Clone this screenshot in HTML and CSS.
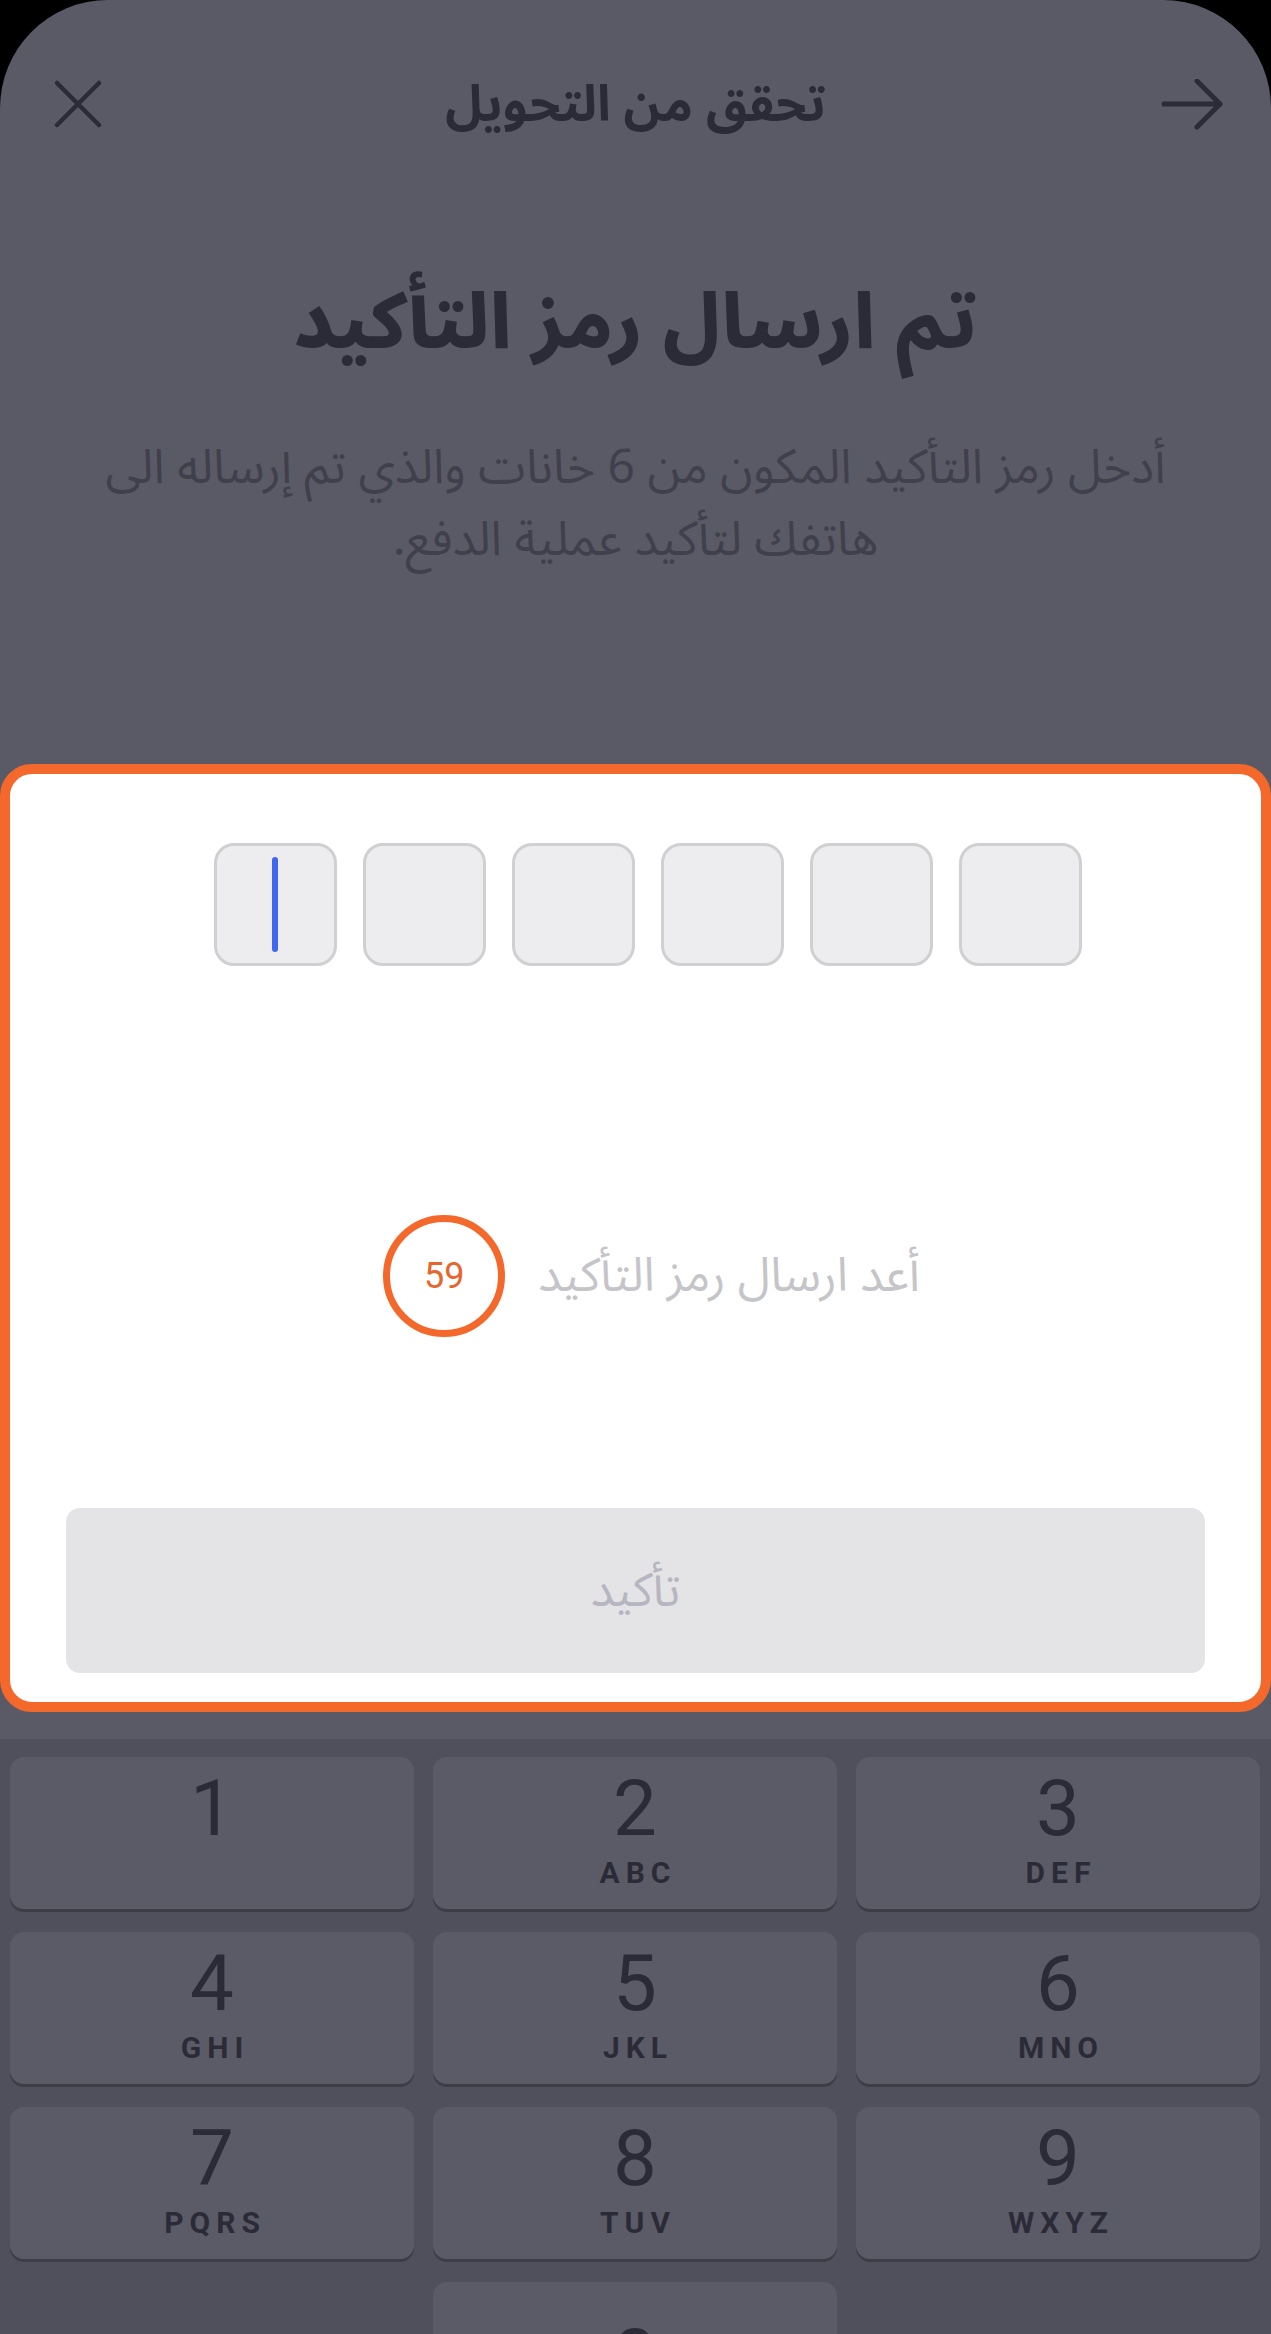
FILE: index.html
```html
<!DOCTYPE html>
<html lang="ar" dir="rtl">
<head>
    <meta charset="UTF-8">
    <meta name="viewport" content="width=device-width, initial-scale=1.0">
    <title>تحقق من التحويل</title>
    <link rel="stylesheet" href="styles.css">
</head>
<body>
    <div class="screen">
        <header class="topbar">
            <button class="icon-btn" aria-label="رجوع">
                <svg width="64" height="52" viewBox="0 0 64 52">
                    <path d="M3 25 H59 M36 2 L59 25 L36 48" fill="none" stroke="#2b2b37" stroke-width="5" stroke-linecap="round" stroke-linejoin="round"/>
                </svg>
            </button>
            <h2 class="page-title">تحقق من التحويل</h2>
            <button class="icon-btn" aria-label="إغلاق">
                <svg width="64" height="52" viewBox="0 0 64 52">
                    <path d="M11 4 L53 46 M53 4 L11 46" fill="none" stroke="#2b2b37" stroke-width="4.5" stroke-linecap="round"/>
                </svg>
            </button>
        </header>

        <section class="intro">
            <h1>تم ارسال رمز التأكيد</h1>
            <p>أدخل رمز التأكيد المكون من 6 خانات والذي تم إرساله الى<br>هاتفك لتأكيد عملية الدفع.</p>
        </section>

        <div class="card">
            <div class="otp-row" dir="ltr">
                <div class="otp-box active"><span class="caret"></span></div>
                <div class="otp-box"></div>
                <div class="otp-box"></div>
                <div class="otp-box"></div>
                <div class="otp-box"></div>
                <div class="otp-box"></div>
            </div>

            <div class="resend-row">
                <span class="resend-text">أعد ارسال رمز التأكيد</span>
                <span class="timer">59</span>
            </div>

            <button class="confirm-btn" disabled>تأكيد</button>
        </div>

        <div class="keypad" dir="ltr">
            <div class="key"><span class="digit">1</span><span class="letters">&nbsp;</span></div>
            <div class="key"><span class="digit">2</span><span class="letters">ABC</span></div>
            <div class="key"><span class="digit">3</span><span class="letters">DEF</span></div>
            <div class="key"><span class="digit">4</span><span class="letters">GHI</span></div>
            <div class="key"><span class="digit">5</span><span class="letters">JKL</span></div>
            <div class="key"><span class="digit">6</span><span class="letters">MNO</span></div>
            <div class="key"><span class="digit">7</span><span class="letters">PQRS</span></div>
            <div class="key"><span class="digit">8</span><span class="letters">TUV</span></div>
            <div class="key"><span class="digit">9</span><span class="letters">WXYZ</span></div>
            <div class="key-blank"></div>
            <div class="key key-zero"><span class="digit">0</span></div>
            <div class="key-blank key-delete">
                <svg width="66" height="50" viewBox="0 0 66 50">
                    <path d="M20 3 H58 A5 5 0 0 1 63 8 V42 A5 5 0 0 1 58 47 H20 L3 25 Z" fill="none" stroke="#2b2b37" stroke-width="4" stroke-linejoin="round"/>
                    <path d="M30 15 L48 35 M48 15 L30 35" fill="none" stroke="#2b2b37" stroke-width="4" stroke-linecap="round"/>
                </svg>
            </div>
        </div>
    </div>
</body>
</html>
```

FILE: styles.css
```css
body {
    margin: 0;
    padding: 0;
    background: #000;
    font-family: "Noto Sans Arabic", "Noto Kufi Arabic", "DejaVu Sans", sans-serif;
}
.screen {
    width: 1271px;
    height: 2334px;
    background: #5a5a66;
    border-radius: 108px 108px 0 0;
    overflow: hidden;
}
.topbar {
    height: 210px;
    display: flex;
    align-items: center;
    justify-content: space-between;
    padding: 0 46px;
}
.icon-btn {
    background: none;
    border: 0;
    padding: 0;
    width: 64px;
    height: 52px;
}
.page-title {
    margin: 0;
    font-size: 50px;
    font-weight: 700;
    color: #2b2b37;
}
.intro {
    height: 554px;
    box-sizing: border-box;
    padding-top: 64px;
    text-align: center;
}
.intro h1 {
    margin: 0;
    font-size: 77px;
    line-height: 100px;
    font-weight: 800;
    color: #2b2b37;
}
.intro p {
    margin: 58px auto 0;
    width: 1180px;
    font-size: 48px;
    line-height: 72px;
    color: #40404c;
}
.card {
    height: 948px;
    box-sizing: border-box;
    background: #fff;
    border: 10px solid #f4692b;
    border-radius: 32px;
    display: flex;
    flex-direction: column;
    align-items: center;
}
.otp-row {
    display: flex;
    gap: 26px;
    margin-top: 69px;
    padding-left: 24px;
}
.otp-box {
    width: 123px;
    height: 123px;
    box-sizing: border-box;
    background: #ededef;
    border: 3px solid #d0d0d3;
    border-radius: 20px;
    display: flex;
    align-items: center;
    justify-content: center;
}
.caret {
    width: 6px;
    height: 95px;
    border-radius: 3px;
    background: #3f68ee;
}
.resend-row {
    display: flex;
    align-items: center;
    gap: 33px;
    margin-top: 249px;
    padding-left: 32px;
}
.resend-text {
    font-size: 47px;
    line-height: 60px;
    color: #c5c5c9;
}
.timer {
    width: 122px;
    height: 122px;
    box-sizing: border-box;
    border: 7px solid #f4692b;
    border-radius: 50%;
    display: flex;
    align-items: center;
    justify-content: center;
    font-family: Roboto, "Liberation Sans", sans-serif;
    font-size: 36px;
    color: #e8652c;
}
.confirm-btn {
    margin-top: 171px;
    width: 1139px;
    height: 165px;
    border: 0;
    border-radius: 14px;
    background: #e4e4e6;
    font-family: inherit;
    font-size: 47px;
    color: #b6b6c0;
}
.keypad {
    margin-top: 27px;
    background: #50505c;
    padding: 18px 11px 0 10px;
    height: 600px;
    display: grid;
    grid-template-columns: repeat(3, 404px);
    grid-auto-rows: 152px;
    column-gap: 19px;
    row-gap: 23px;
}
.key {
    background: #5b5b67;
    border-radius: 14px;
    box-shadow: 0 3px 0 #3d3d47;
    display: flex;
    flex-direction: column;
    align-items: center;
    padding-top: 12px;
    box-sizing: border-box;
    font-family: Roboto, "Liberation Sans", sans-serif;
    color: #2b2b37;
}
.digit {
    font-size: 78px;
    line-height: 80px;
}
.letters {
    margin-top: 9px;
    font-size: 30px;
    line-height: 30px;
    font-weight: 700;
    letter-spacing: 6px;
    padding-left: 6px;
}
.key-zero {
    justify-content: center;
    padding-top: 0;
}
.key-delete {
    display: flex;
    justify-content: center;
    align-items: center;
}
```
